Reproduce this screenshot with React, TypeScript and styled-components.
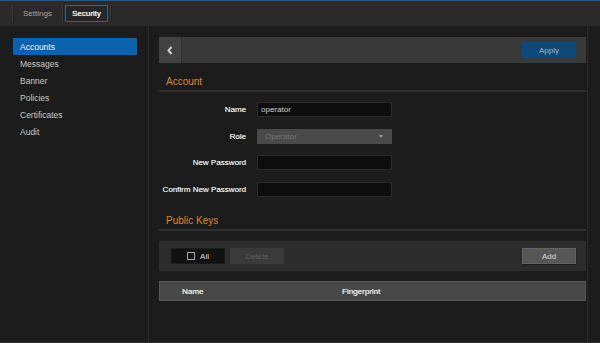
import React from "react";
import styled, { createGlobalStyle } from "styled-components";

const GlobalStyle = createGlobalStyle`
  html, body {
    margin: 0;
    padding: 0;
    background: #1c1c1c;
  }
  body {
    font-family: "Liberation Sans", Arial, sans-serif;
    font-size: 8px;
    color: #d0d0d0;
  }
  * {
    box-sizing: border-box;
  }
`;

const Page = styled.div`
  width: 600px;
  height: 343px;
  display: flex;
  flex-direction: column;
  background: #1c1c1c;
  overflow: hidden;
`;

const TopBar = styled.div`
  height: 26px;
  flex: none;
  display: flex;
  align-items: center;
  padding-left: 12px;
  background: #2a2a2a;
  border-top: 1px solid #2a5988;
`;

const TabSep = styled.div`
  width: 1px;
  height: 17px;
  background: #3a3a3a;
  box-shadow: 1px 0 0 #1f1f1f;
`;

const Tab = styled.div<{ $active?: boolean }>`
  height: 17px;
  display: flex;
  align-items: center;
  padding: 0 ${(p) => (p.$active ? "6px" : "9px")};
  margin: 0 ${(p) => (p.$active ? "2px" : "0")};
  font-size: 8px;
  color: ${(p) => (p.$active ? "#ececec" : "#a8a8a8")};
  border: 1px solid ${(p) => (p.$active ? "#2c6397" : "transparent")};
  background: ${(p) => (p.$active ? "#262626" : "transparent")};
  text-shadow: ${(p) => (p.$active ? "0.25px 0 0 #ececec" : "none")};
`;

const Body = styled.div`
  flex: 1;
  display: flex;
  border-bottom: 1px solid #2c2c2c;
`;

const Sidebar = styled.div`
  width: 149px;
  flex: none;
  padding: 12px 11px 0 13px;
  border-right: 1px solid #2a2a2a;
`;

const NavItem = styled.div<{ $active?: boolean }>`
  height: 17px;
  display: flex;
  align-items: center;
  padding-left: 7px;
  font-size: 8.5px;
  color: ${(p) => (p.$active ? "#f2f2f2" : "#c8c8c8")};
  background: ${(p) => (p.$active ? "#0b63ad" : "transparent")};
`;

const Main = styled.div`
  width: 439px;
  flex: none;
  padding: 11px 1px 0 10px;
  border-right: 1px solid #2a2a2a;
`;

const Toolbar = styled.div<{ $h: number; $bg: string; $top?: number }>`
  height: ${(p) => p.$h}px;
  margin-top: ${(p) => p.$top ?? 0}px;
  display: flex;
  align-items: center;
  gap: 5px;
  background: ${(p) => p.$bg};
`;

const BackButton = styled.div`
  width: 23px;
  height: 100%;
  display: flex;
  align-items: center;
  justify-content: center;
  background: #424242;
  border-right: 1px solid #2e2e2e;
`;

const Button = styled.div<{ $kind: "primary" | "plain" | "disabled" }>`
  width: 54px;
  height: 15.5px;
  display: flex;
  align-items: center;
  justify-content: center;
  font-size: 8px;
  color: ${(p) =>
    p.$kind === "primary" ? "#a9b4bf" : p.$kind === "plain" ? "#dcdcdc" : "#5f5f5f"};
  background: ${(p) =>
    p.$kind === "primary" ? "#0b4a7a" : p.$kind === "plain" ? "#565656" : "#3a3a3a"};
  border: 1px solid
    ${(p) => (p.$kind === "plain" ? "#626262" : "transparent")};
  box-shadow: ${(p) => (p.$kind === "plain" ? "0 1px 1px #1a1a1a" : "none")};
`;

const Spacer = styled.div`
  flex: 1;
`;

const EndGap = styled.div`
  width: 5px;
`;

const SectionTitle = styled.div<{ $top: number }>`
  padding: ${(p) => p.$top}px 0 2px 7px;
  line-height: 12px;
  font-size: 10px;
  color: #d9872f;
  border-bottom: 2px solid #303030;
`;

const Form = styled.div`
  margin-top: 10px;
  display: grid;
  grid-template-columns: 87px 135px;
  column-gap: 11px;
  row-gap: 11.5px;
  align-items: center;
`;

const Label = styled.div`
  text-align: right;
  font-size: 8px;
  color: #dedede;
  text-shadow: 0.2px 0 0 #dedede;
`;

const Input = styled.div<{ $disabled?: boolean }>`
  height: 15px;
  display: flex;
  align-items: center;
  justify-content: space-between;
  padding: 0 8px 0 ${(p) => (p.$disabled ? "7px" : "3px")};
  font-size: 8px;
  color: ${(p) => (p.$disabled ? "#777" : "#cfcfcf")};
  background: ${(p) => (p.$disabled ? "#4a4a4a" : "#0d0d0d")};
  border: 1px solid ${(p) => (p.$disabled ? "#4a4a4a" : "#2c2c2c")};
`;

const Caret = styled.span`
  width: 0;
  height: 0;
  border-left: 2.5px solid transparent;
  border-right: 2.5px solid transparent;
  border-top: 3px solid #9a9a9a;
`;

const AllBox = styled.div`
  width: 54px;
  height: 15.5px;
  margin-left: 12px;
  display: flex;
  align-items: center;
  justify-content: center;
  gap: 5px;
  font-size: 8px;
  color: #dcdcdc;
  background: #121212;
  border: 1px solid #1a1a1a;
`;

const Check = styled.span`
  width: 8px;
  height: 8px;
  border: 1px solid #a8a8a8;
`;

const TableHead = styled.div`
  margin-top: 10px;
  height: 20px;
  display: grid;
  grid-template-columns: 160px 1fr;
  align-items: center;
  padding-left: 22px;
  background: #484848;
  border: 1px solid #565656;
  font-size: 8px;
  color: #e0e0e0;
  text-shadow: 0.2px 0 0 #e0e0e0;
`;

const navItems = ["Accounts", "Messages", "Banner", "Policies", "Certificates", "Audit"];

export default function App() {
  return (
    <Page>
      <GlobalStyle />
      <TopBar>
        <TabSep />
        <Tab>Settings</Tab>
        <TabSep />
        <Tab $active>Security</Tab>
        <TabSep />
      </TopBar>
      <Body>
        <Sidebar>
          {navItems.map((n, i) => (
            <NavItem key={n} $active={i === 0}>
              {n}
            </NavItem>
          ))}
        </Sidebar>
        <Main>
          <Toolbar $h={26} $bg="#393939">
            <BackButton>
              <svg width="6" height="9" viewBox="0 0 6 9">
                <path d="M4.5 1 L1.5 4.5 L4.5 8" fill="none" stroke="#d0d0d0" strokeWidth="2" />
              </svg>
            </BackButton>
            <Spacer />
            <Button $kind="primary">Apply</Button>
            <EndGap />
          </Toolbar>

          <SectionTitle $top={13}>Account</SectionTitle>
          <Form>
            <Label>Name</Label>
            <Input>operator</Input>
            <Label>Role</Label>
            <Input $disabled>
              Operator
              <Caret />
            </Input>
            <Label>New Password</Label>
            <Input />
            <Label>Confirm New Password</Label>
            <Input />
          </Form>

          <SectionTitle $top={18.5}>Public Keys</SectionTitle>
          <Toolbar $h={30} $bg="#2c2c2c" $top={10}>
            <AllBox>
              <Check />
              All
            </AllBox>
            <Button $kind="disabled">Delete</Button>
            <Spacer />
            <Button $kind="plain">Add</Button>
            <EndGap />
          </Toolbar>

          <TableHead>
            <span>Name</span>
            <span>Fingerprint</span>
          </TableHead>
        </Main>
      </Body>
    </Page>
  );
}
